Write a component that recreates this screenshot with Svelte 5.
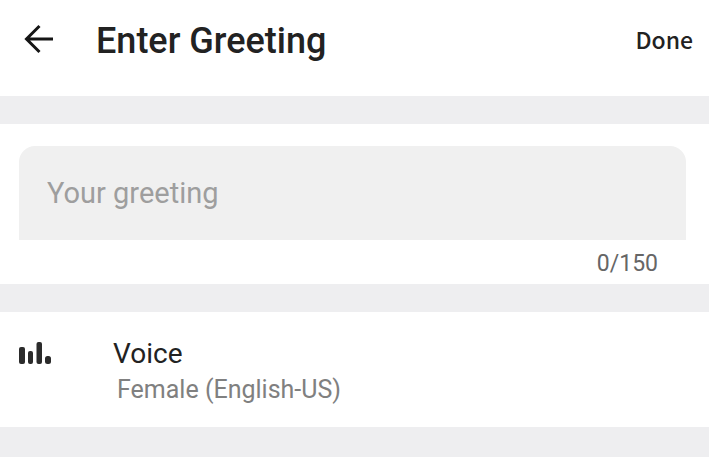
<script lang="ts">
    const maxLength = 150;

    let greeting = $state("");
</script>

<main class="page">
    <header class="bar">
        <button type="button" class="back" aria-label="Back">
            <svg viewBox="0 0 30 30" aria-hidden="true">
                <path d="M29 15H3M15.500 2L2.500 15l13 13" />
            </svg>
        </button>
        <h1>Enter Greeting</h1>
        <button type="button" class="done">Done</button>
    </header>

    <section class="greeting">
        <input
            type="text"
            placeholder="Your greeting"
            aria-label="Your greeting"
            maxlength={maxLength}
            bind:value={greeting}
        />
        <span class="counter">{greeting.length}/{maxLength}</span>
    </section>

    <button type="button" class="voice">
        <svg viewBox="0 0 32 22" aria-hidden="true">
            <rect x="0" y="5" width="6" height="17" rx="2" />
            <rect x="9" y="9" width="5" height="13" rx="2" />
            <rect x="17.500" y="0" width="5.500" height="22" rx="2" />
            <rect x="26" y="14" width="6" height="8" rx="2.500" />
        </svg>
        <span class="label">
            <span class="title">Voice</span>
            <span class="value">Female (English-US)</span>
        </span>
    </button>
</main>

<style>
    :global(body) {
        margin: 0;
        background: #fff;
    }

    .page {
        display: flex;
        flex-direction: column;
        gap: 28px;
        min-height: 100vh;
        box-sizing: border-box;
        border-right: 1px solid #fff;
        background: #eeeef0;
        color: #222;
        font-family: Roboto, "Liberation Sans", sans-serif;
    }

    button {
        border: 0;
        padding: 0;
        background: none;
        color: inherit;
        font-family: inherit;
        cursor: pointer;
    }

    .bar {
        display: flex;
        align-items: flex-start;
        padding: 12px 16px 26px 24px;
        background: #fff;
    }

    .back {
        display: flex;
        align-items: center;
        height: 54px;
    }

    .back svg {
        width: 30px;
        height: 30px;
        fill: none;
        stroke: #151515;
        stroke-width: 3;
    }

    h1 {
        flex: 1;
        margin: 0 0 0 42px;
        font-size: 36px;
        font-weight: 500;
        line-height: 58px;
    }

    .done {
        font-family: "Noto Sans CJK SC", Roboto, sans-serif;
        font-size: 23px;
        font-weight: 500;
        line-height: 54px;
    }

    .greeting {
        display: flex;
        flex-direction: column;
        padding: 22px 23px 4px 19px;
        background: #fff;
    }

    input {
        box-sizing: border-box;
        width: 100%;
        height: 94px;
        border: 0;
        border-radius: 16px 16px 0 0;
        padding: 0 28px;
        background: #f0f0f0;
        color: #222;
        font-family: inherit;
        font-size: 29px;
        outline: none;
    }

    input::placeholder {
        color: #9e9e9e;
        opacity: 1;
    }

    .counter {
        align-self: flex-end;
        padding: 8px 28px 0 0;
        color: #666;
        font-size: 23px;
        line-height: 32px;
    }

    .voice {
        display: flex;
        align-items: flex-start;
        gap: 62px;
        padding: 24px 19px 19px;
        background: #fff;
        text-align: left;
    }

    .voice svg {
        width: 32px;
        height: 22px;
        margin-top: 6px;
        fill: #2b2b2b;
    }

    .label {
        display: flex;
        flex-direction: column;
    }

    .title {
        font-size: 28px;
        line-height: 36px;
    }

    .value {
        padding-left: 4px;
        color: #808080;
        font-size: 25px;
        line-height: 36px;
    }
</style>
